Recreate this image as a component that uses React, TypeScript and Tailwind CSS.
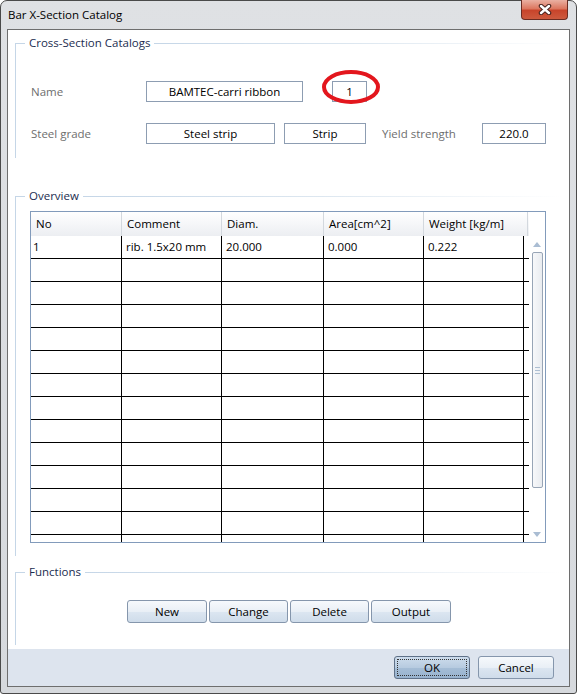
import type { ReactNode } from "react";

const rows = Array.from({ length: 14 }, (_, i) =>
  i === 0 ? ["1", "rib. 1.5x20 mm", "20.000", "0.000", "0.222"] : ["", "", "", "", ""]
);

const dataCols = ["w-[91px]", "w-[100px]", "w-[102px]", "w-[100px]", "w-[100px]"];
const headCols = [
  { label: "No", w: "w-[91px]" },
  { label: "Comment", w: "w-[100px]" },
  { label: "Diam.", w: "w-[102px]" },
  { label: "Area[cm^2]", w: "w-[100px]" },
  { label: "Weight [kg/m]", w: "w-[104px]" },
];

function Group({ title, className, children }: { title: string; className?: string; children: ReactNode }) {
  return (
    <div className={className}>
      <div className="flex h-[16px] items-center">
        <div className="h-[8px] w-[10px] self-end border-l border-t border-[#c5d6e7]" />
        <span className="px-[4px] leading-[16px] text-[#1b2d4f]">{title}</span>
        <div className="h-px flex-1 bg-gradient-to-r from-[#c5d6e7] via-[#dde7f0] to-white" />
      </div>
      <div className="border-l border-[#c5d6e7]">{children}</div>
    </div>
  );
}

function Box({ w, children }: { w: string; children: ReactNode }) {
  return (
    <div className={`flex h-[21px] items-center justify-center border border-[#8d9db2] bg-white ${w}`}>
      {children}
    </div>
  );
}

function Button({ label, w = "w-[79px]" }: { label: string; w?: string }) {
  return (
    <button
      type="button"
      className={`flex h-[23px] items-center justify-center rounded-[3px] border border-[#8596ac] bg-[linear-gradient(#f6f9fc,#e9eff6_50%,#dce6f1_51%,#cfdcea)] ${w}`}
    >
      {label}
    </button>
  );
}

function CloseButton() {
  return (
    <div className="-mt-px flex h-[20px] w-[47px] items-center justify-center rounded-b-[4px] border border-t-0 border-[#6b2c22] bg-[linear-gradient(#eab0a2,#dc7760_45%,#c8442b_55%,#cd5a3e)]">
      <svg width="14" height="11" viewBox="0 0 14 11">
        <path d="M3 2 L11 9 M11 2 L3 9" stroke="#4a2520" strokeWidth="4.5" strokeLinecap="round" fill="none" />
        <path d="M3 2 L11 9 M11 2 L3 9" stroke="#ffffff" strokeWidth="2.4" strokeLinecap="round" fill="none" />
      </svg>
    </div>
  );
}

function Arrow({ up }: { up?: boolean }) {
  return (
    <div className="flex h-[16px] w-full items-center justify-center">
      <svg width="8" height="5" viewBox="0 0 8 5">
        <path d={up ? "M0 5 L4 0 L8 5 Z" : "M0 0 L4 5 L8 0 Z"} fill="#aabdd3" />
      </svg>
    </div>
  );
}

function Table() {
  return (
    <div className="flex h-[332px] w-[516px] border border-[#829bbb]">
      <div className="flex w-[498px] flex-col overflow-hidden">
        <div className="flex h-[24px] shrink-0 bg-gradient-to-b from-white to-[#eceef2]">
          {headCols.map((c) => (
            <div key={c.label} className={`flex items-center border-r border-[#d3d8de] px-[5px] ${c.w}`}>
              {c.label}
            </div>
          ))}
        </div>
        {rows.map((r, i) => (
          <div key={i} className="flex h-[23px] shrink-0 border-b border-black">
            {r.map((v, j) => (
              <div
                key={j}
                className={`flex items-center border-r border-black ${j === 0 ? "px-[2px]" : "px-[4px]"} ${dataCols[j]}`}
              >
                {v}
              </div>
            ))}
            <div className="w-[5px]" />
          </div>
        ))}
      </div>
      <div className="flex flex-1 flex-col items-center pt-[24px]">
        <Arrow up />
        <div className="flex h-[236px] w-[11px] flex-col items-center justify-center gap-[2px] rounded-[2px] border border-[#98a5b6] bg-gradient-to-r from-[#f7f8fa] to-[#e9ecf0]">
          <div className="h-px w-[5px] bg-[#aebfd2]" />
          <div className="h-px w-[5px] bg-[#aebfd2]" />
          <div className="h-px w-[5px] bg-[#aebfd2]" />
        </div>
        <div className="flex-1" />
        <Arrow />
      </div>
    </div>
  );
}

export default function App() {
  return (
    <div className="h-[694px] w-[577px] bg-white font-['Open_Sans',sans-serif] text-[11.5px] text-black">
      <div className="flex h-full flex-col rounded-b-[3px] rounded-t-[7px] border border-[#4a4a4a] bg-gradient-to-b from-[#dfe1e4] to-[#d6d9dd] px-[6px] pb-[6px]">
        <div className="-mx-[6px] flex h-[28px] shrink-0 items-start justify-between pl-[7px] pr-[8px]">
          <span className="mt-[6px] leading-[16px]">Bar X-Section Catalog</span>
          <CloseButton />
        </div>

        <div className="flex flex-1 flex-col border border-[#6e6e6e] bg-white">
          <div className="flex flex-1 flex-col">
            <Group title="Cross-Section Catalogs" className="mx-[7px] mt-[5px]">
              <div className="pb-[14px] pl-[15px] pt-[30px]">
                <div className="flex h-[21px] items-center">
                  <span className="w-[115px] text-[#6e6e6e]">Name</span>
                  <Box w="w-[157px]">BAMTEC-carri ribbon</Box>
                  <div className="relative ml-[29px]">
                    <Box w="w-[35px]">1</Box>
                    <svg className="absolute left-[-10px] top-[-11px]" width="58" height="34" viewBox="0 0 58 34">
                      <ellipse cx="29" cy="17" rx="27" ry="15" fill="none" stroke="#e3161d" strokeWidth="4" />
                    </svg>
                  </div>
                </div>
                <div className="mt-[21px] flex h-[21px] items-center">
                  <span className="w-[115px] text-[#6e6e6e]">Steel grade</span>
                  <Box w="w-[129px]">Steel strip</Box>
                  <div className="ml-[9px]">
                    <Box w="w-[82px]">Strip</Box>
                  </div>
                  <span className="ml-[16px] w-[100px] text-[#6e6e6e]">Yield strength</span>
                  <Box w="w-[64px]">220.0</Box>
                </div>
              </div>
            </Group>

            <Group title="Overview" className="mx-[7px] mt-[30px]">
              <div className="pb-[13px] pl-[14px] pt-[7px]">
                <Table />
              </div>
            </Group>

            <Group title="Functions" className="mx-[7px] mt-[8px]">
              <div className="flex justify-center gap-[2px] pb-[22px] pt-[20px]">
                <Button label="New" w="w-[80px]" />
                <Button label="Change" />
                <Button label="Delete" />
                <Button label="Output" w="w-[80px]" />
              </div>
            </Group>
          </div>

          <div className="flex h-[37px] shrink-0 items-center justify-end gap-[8px] bg-[#dde4ee] pr-[15px]">
            <button
              type="button"
              className="flex h-[23px] w-[76px] items-center justify-center rounded-[3px] border border-[#5f7188] bg-[linear-gradient(#cddcec,#b7cbe0_50%,#a5bdd6_51%,#98b3cf)] p-[2px]"
            >
              <span className="flex h-full w-full items-center justify-center border border-dotted border-[#333]">
                OK
              </span>
            </button>
            <Button label="Cancel" w="w-[76px]" />
          </div>
        </div>
      </div>
    </div>
  );
}
